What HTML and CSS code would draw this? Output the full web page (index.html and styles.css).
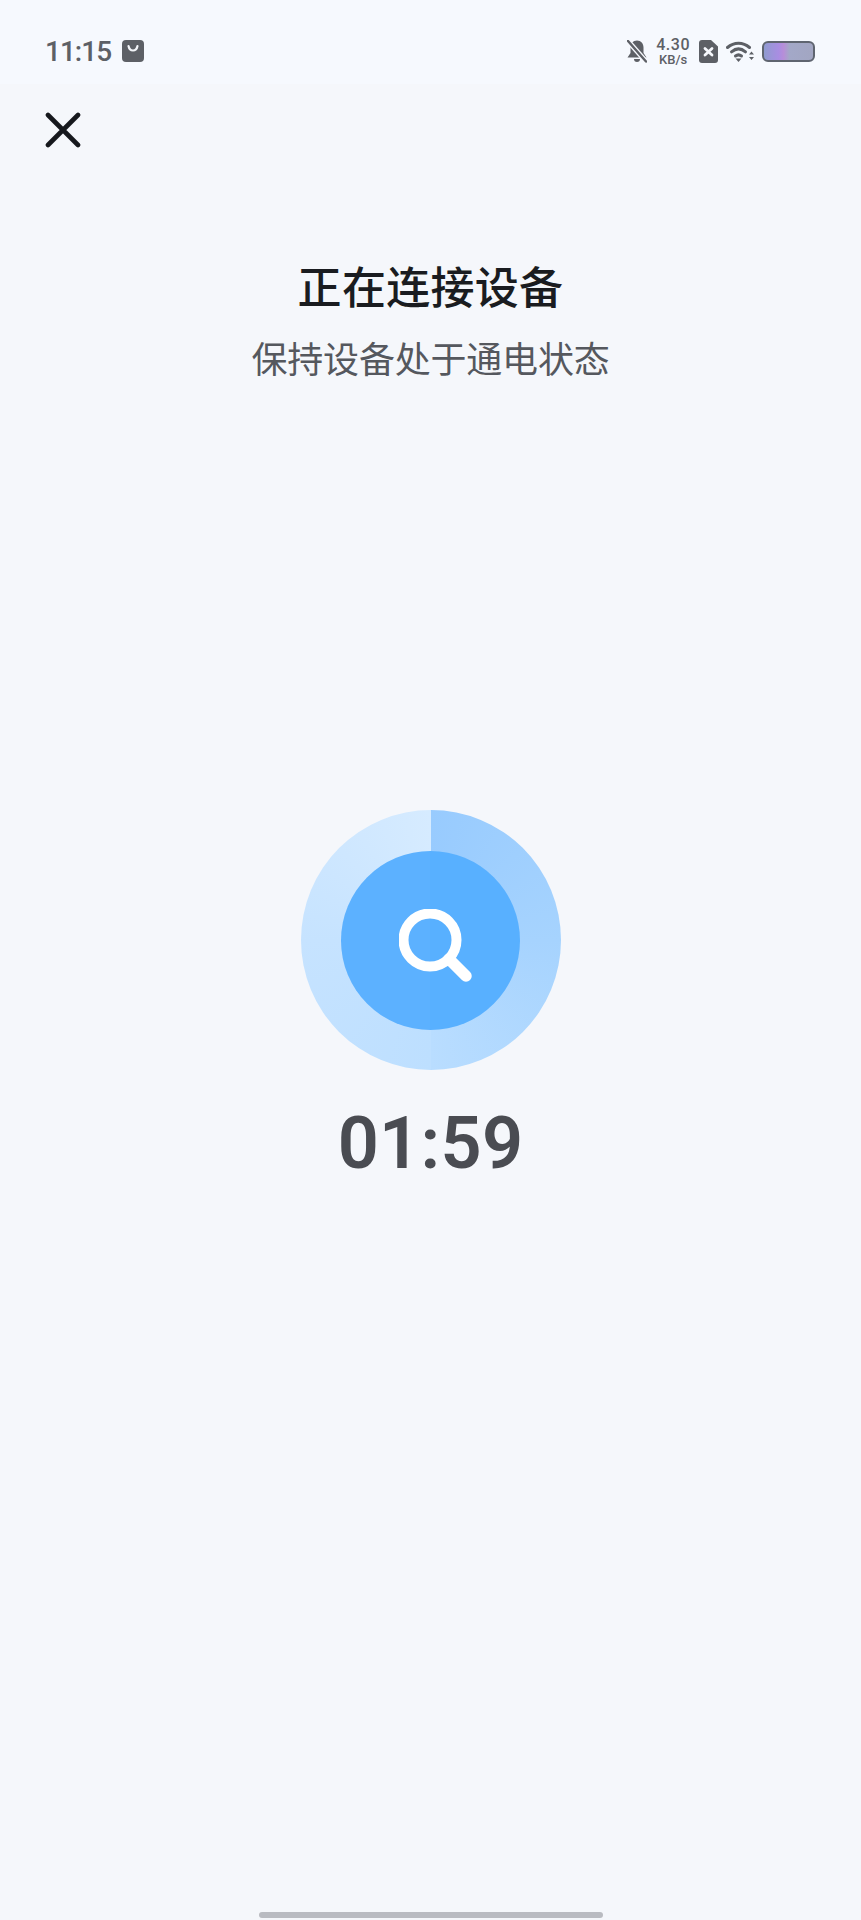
FILE: index.html
```html
<!DOCTYPE html>
<html lang="zh-CN">
<head>
    <meta charset="UTF-8">
    <meta name="viewport" content="width=device-width, initial-scale=1.0">
    <title>正在连接设备</title>
    <link rel="stylesheet" href="styles.css">
</head>
<body>
    <header class="status-bar">
        <div class="status-left">
            <span class="clock">11:15</span>
            <svg class="bag-icon" width="22" height="22" viewBox="0 0 22 22">
                <rect width="22" height="22" rx="4" fill="#5d6066"/>
                <path d="M6.500 6c.6 3 2.400 4.500 4.500 4.500s3.900-1.500 4.500-4.500" fill="none" stroke="#f3f5f9" stroke-width="2.200" stroke-linecap="round"/>
            </svg>
        </div>
        <div class="status-right">
            <svg class="bell-icon" width="20" height="23" viewBox="0 0 20 23">
                <path d="M10 .5C6 .5 3.500 3.500 3.500 7.500V13L.5 17.500h19L16.500 13V7.500c0-4-2.500-7-6.500-7z" fill="#5d6066"/>
                <path d="M7 19h6a3 3 0 0 1-6 0z" fill="#5d6066"/>
                <path d="M1 1l18 20.500" stroke="#f6f8fd" stroke-width="5"/>
                <path d="M1 1l18 20.500" stroke="#5d6066" stroke-width="2.400" stroke-linecap="round"/>
            </svg>
            <div class="speed">
                <span class="speed-value">4.30</span>
                <span class="speed-unit">KB/s</span>
            </div>
            <svg class="sim-icon" width="19" height="23" viewBox="0 0 19 23">
                <path d="M3 0h9l7 6.500V20a3 3 0 0 1-3 3H3a3 3 0 0 1-3-3V3a3 3 0 0 1 3-3z" fill="#5d6066"/>
                <path d="M6 8.500l7 6.500M13 8.500l-7 6.500" stroke="#f6f8fd" stroke-width="2.800" stroke-linecap="round"/>
            </svg>
            <svg class="wifi-icon" width="28" height="21" viewBox="0 0 28 21">
                <path d="M1.500 6.500C8 .8 17 .8 23.500 6.500" fill="none" stroke="#5d6066" stroke-width="3" stroke-linecap="round"/>
                <path d="M5.500 10.800c4.500-3.800 9.500-3.800 14 0" fill="none" stroke="#5d6066" stroke-width="3" stroke-linecap="round"/>
                <path d="M9.500 15c2.200-1.700 3.800-1.700 6 0" fill="none" stroke="#5d6066" stroke-width="3" stroke-linecap="round"/>
                <path d="M9.500 17.500h6l-3 3.500z" fill="#5d6066"/>
                <path d="M23 13.500l2.500-3 2.500 3zM23 16l2.500 3 2.500-3z" fill="#5d6066"/>
            </svg>
            <div class="battery"></div>
        </div>
    </header>

    <main class="page">
        <button class="close-btn" aria-label="关闭">
            <svg width="36" height="36" viewBox="0 0 36 36">
                <path d="M3 3l30 30M33 3L3 33" stroke="#16181d" stroke-width="4.600" stroke-linecap="round"/>
            </svg>
        </button>

        <h1 class="title">正在连接设备</h1>
        <p class="subtitle">保持设备处于通电状态</p>

        <div class="ring">
            <div class="ring-inner">
                <svg class="search-icon" width="74" height="74" viewBox="0 0 74 74">
                    <circle cx="31" cy="31" r="26.500" fill="none" stroke="#fff" stroke-width="10"/>
                    <path d="M50 50l17 17" stroke="#fff" stroke-width="11.500" stroke-linecap="round"/>
                </svg>
            </div>
        </div>

        <div class="timer">01:59</div>
    </main>

    <div class="home-bar"></div>
</body>
</html>
```

FILE: styles.css
```css
* {
    box-sizing: border-box;
    margin: 0;
    padding: 0;
}

html, body {
    height: 1920px;
    overflow: hidden;
}

body {
    display: flex;
    flex-direction: column;
    font-family: "Noto Sans CJK SC", "Noto Sans", sans-serif;
    background: #f5f7fb;
}

/* status bar */
.status-bar {
    display: flex;
    justify-content: space-between;
    align-items: center;
    height: 84px;
    padding: 0 46px 0 45px;
    background: #f6f9fe;
    color: #5d6066;
}

.status-left {
    display: flex;
    align-items: center;
    gap: 11px;
    margin-top: 18px;
}

.clock {
    font-family: Roboto, sans-serif;
    font-size: 28px;
    font-weight: 500;
    letter-spacing: -1px;
}

.status-right {
    display: flex;
    align-items: center;
    margin-top: 18px;
}

.speed {
    display: flex;
    flex-direction: column;
    align-items: center;
    margin: 0 9px;
    font-family: Roboto, sans-serif;
    font-weight: 500;
}

.speed-value {
    font-size: 16px;
    line-height: 17px;
    letter-spacing: 0.5px;
}

.speed-unit {
    font-size: 13px;
    line-height: 13px;
}

.wifi-icon {
    margin-left: 8px;
}

.battery {
    width: 53px;
    height: 21px;
    margin-left: 8px;
    border: 2.5px solid #5f6570;
    border-radius: 6px;
    background: linear-gradient(90deg, #8f9bd0 0%, #a98de2 30%, #b78ed8 40%, #a3a8c8 52%, #a2a6c2 100%);
}

/* main content */
.page {
    display: flex;
    flex-direction: column;
    align-items: center;
    flex: 1;
}

.close-btn {
    align-self: flex-start;
    display: flex;
    margin: 28px 0 0 45px;
    border: none;
    background: none;
}

.title {
    margin-top: 106px;
    font-size: 44px;
    font-weight: 500;
    line-height: 62px;
    letter-spacing: 0.3px;
    color: #1a1c20;
}

.subtitle {
    margin-top: 16px;
    font-size: 36px;
    font-weight: 400;
    line-height: 50px;
    letter-spacing: -0.2px;
    color: #55585e;
}

.ring {
    display: flex;
    justify-content: center;
    align-items: center;
    width: 260px;
    height: 260px;
    margin-top: 428px;
    border-radius: 50%;
    background: conic-gradient(#98cbfe 0deg, #a6d3fe 90deg, #b9ddff 180deg, #bddfff 180deg, #c6e3ff 270deg, #d6ebff 360deg);
}

.ring-inner {
    display: flex;
    justify-content: center;
    align-items: center;
    width: 179px;
    height: 179px;
    border-radius: 50%;
    background: linear-gradient(90deg, #5cb1ff 50%, #58b0ff 50%);
}

.search-icon {
    margin: 11px 0 0 10px;
}

.timer {
    margin-top: 31px;
    font-family: Roboto, sans-serif;
    font-size: 72px;
    font-weight: 600;
    line-height: 86px;
    letter-spacing: 0.3px;
    color: #4a4c52;
}

.home-bar {
    width: 344px;
    height: 6px;
    margin: 0 auto 2px;
    border-radius: 3px;
    background: #b9bbc1;
}
```
